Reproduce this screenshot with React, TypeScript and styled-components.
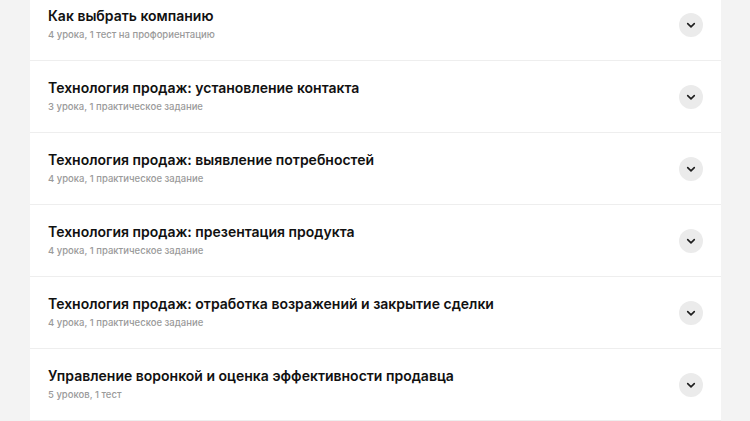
import { createGlobalStyle, styled } from "styled-components";

const GlobalStyle = createGlobalStyle`
  html, body {
    margin: 0;
    padding: 0;
    background: #f3f3f3;
    overflow: hidden;
    font-family: Inter, "Noto Sans", sans-serif;
  }
`;

interface Module {
  title: string;
  info: string;
}

const modules: Module[] = [
  { title: "Как выбрать компанию", info: "4 урока, 1 тест на профориентацию" },
  { title: "Технология продаж: установление контакта", info: "3 урока, 1 практическое задание" },
  { title: "Технология продаж: выявление потребностей", info: "4 урока, 1 практическое задание" },
  { title: "Технология продаж: презентация продукта", info: "4 урока, 1 практическое задание" },
  { title: "Технология продаж: отработка возражений и закрытие сделки", info: "4 урока, 1 практическое задание" },
  { title: "Управление воронкой и оценка эффективности продавца", info: "5 уроков, 1 тест" },
];

function Chevron() {
  return (
    <svg width="12" height="12" viewBox="0 0 12 12" fill="none">
      <path d="M2.7 4.6L6 7.9L9.3 4.6" stroke="#1f1f1f" strokeWidth="1.6" strokeLinecap="round" strokeLinejoin="round" />
    </svg>
  );
}

function App() {
  return (
    <>
      <GlobalStyle />
      <Page>
        <Card>
          {modules.map((m) => (
            <Row key={m.title}>
              <TextBlock>
                <Title>{m.title}</Title>
                <Info>{m.info}</Info>
              </TextBlock>
              <ToggleButton>
                <Chevron />
              </ToggleButton>
            </Row>
          ))}
        </Card>
      </Page>
    </>
  );
}

export default App;

const Page = styled.div`
  padding: 0 29px 0 30px;
  margin-top: -11px;
`;

const Card = styled.div`
  background: #fff;
  display: flex;
  flex-direction: column;
`;

const Row = styled.div`
  height: 72px;
  box-sizing: border-box;
  display: flex;
  align-items: center;
  justify-content: space-between;
  padding: 0 18px 2px 18px;
  border-bottom: 1px solid #eeeeee;
`;

const TextBlock = styled.div`
  display: flex;
  flex-direction: column;
  gap: 2px;
`;

const Title = styled.div`
  font-size: 14px;
  font-weight: 600;
  line-height: 20px;
  color: #111;
`;

const Info = styled.div`
  font-size: 9.5px;
  font-weight: 500;
  line-height: 13px;
  color: #9a9a9a;
`;

const ToggleButton = styled.button`
  width: 24px;
  height: 24px;
  border-radius: 50%;
  border: none;
  padding: 0;
  margin-top: 2px;
  background: #ebebeb;
  display: flex;
  align-items: center;
  justify-content: center;
  cursor: pointer;
`;
